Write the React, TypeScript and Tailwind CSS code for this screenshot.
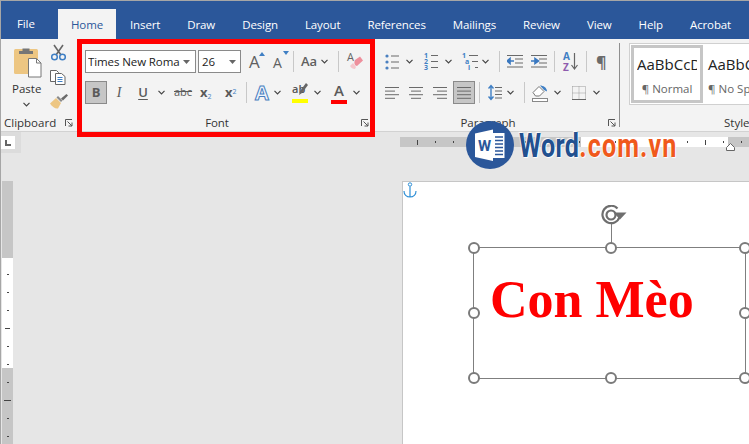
type P = { className?: string }

const ui = "font-['Open_Sans','Noto_Sans',sans-serif]"
const tabs = ["Insert", "Draw", "Design", "Layout", "References", "Mailings", "Review", "View", "Help", "Acrobat"]
const hTicks = Array.from({ length: 19 }, (_, i) => i)
const vTicks = Array.from({ length: 10 }, (_, i) => i)
const handles = [
  "left-[-6px] top-[-6px]", "left-[131px] top-[-6px]", "right-[-6px] top-[-6px]",
  "left-[-6px] top-[59px]", "right-[-6px] top-[59px]",
  "left-[-6px] bottom-[-6px]", "left-[131px] bottom-[-6px]", "right-[-6px] bottom-[-6px]",
]

function Chev({ className = "" }: P) {
  return (
    <svg width="7" height="5" viewBox="0 0 7 5" className={`shrink-0 ${className}`}>
      <path d="M.5 .8 3.5 3.8 6.5 .8" stroke="#444" strokeWidth="1.2" fill="none" />
    </svg>
  )
}

function Sep({ className = "" }: P) {
  return <div className={`w-px h-[21px] bg-[#c8c8c8] shrink-0 ${className}`} />
}

function Launcher({ className = "" }: P) {
  return (
    <svg width="8" height="8" viewBox="0 0 8 8" className={`shrink-0 ${className}`}>
      <path d="M.5 7V.5H7M2.5 2.5 7 7M7 3.5V7H3.5" stroke="#555" fill="none" />
    </svg>
  )
}

function Lines({ rows, className = "" }: { rows: number[][]; className?: string }) {
  return (
    <svg width="14" height="14" viewBox="0 0 14 14" className={`shrink-0 ${className}`}>
      {rows.map((r, i) => (
        <rect key={i} x={r[0]} y={1 + i * 3.6} width={r[1]} height="1" fill="#6a6a6a" />
      ))}
    </svg>
  )
}

function Dots({ className = "" }: P) {
  return (
    <svg width="14" height="16" viewBox="0 0 14 16" className={`shrink-0 ${className}`}>
      {[2, 8, 14].map((y) => (
        <circle key={y} cx="2" cy={y} r="1.6" fill="#4a80c0" />
      ))}
      {[2, 8, 14].map((y) => (
        <rect key={y} x="6" y={y - 0.5} width="8" height="1" fill="#6a6a6a" />
      ))}
    </svg>
  )
}

// numbered list buttons: marks are real text, rules are thin bars
function NumList({ marks, pads, widths, className = "" }: { marks: string[]; pads: string[]; widths: string[]; className?: string }) {
  return (
    <div className={`flex flex-col shrink-0 ${className}`}>
      {marks.map((m, i) => (
        <div key={m} className={`flex items-center h-[6px] ${pads[i]}`}>
          <span className="w-[5px] text-[7px] leading-[6px] font-bold text-[#3f7fc4]">{m}</span>
          <div className={`h-px ml-[2px] bg-[#6a6a6a] ${widths[i]}`} />
        </div>
      ))}
    </div>
  )
}

function Indent({ flip, className = "" }: { flip?: boolean; className?: string }) {
  return (
    <svg width="16" height="13" viewBox="0 0 16 13" className={`shrink-0 ${className}`}>
      {[0.5, 4, 8, 12].map((y, i) => (
        <rect key={y} x={i === 1 || i === 2 ? 8 : 0} y={y - 0.5} width={i === 1 || i === 2 ? 8 : 16} height="1" fill="#6a6a6a" />
      ))}
      <path d={flip ? "M0 6h4V3.5L7.5 6 4 8.5V6" : "M7 6H3V3.5L0 6l3 2.5V6"} stroke="#3a78c0" strokeWidth="1.6" fill="#3a78c0" />
    </svg>
  )
}

function PasteIcon() {
  return (
    <svg width="29" height="31" viewBox="0 0 29 31" className="shrink-0">
      <rect x="0" y="2" width="24" height="25" rx="1.5" fill="#edc682" />
      <path d="M5 7V4h3.5V1.500h7V4H19v3z" fill="#767676" />
      <path d="M14.500 11.500h8l4.500 4.500v14h-12.500z" fill="#fff" stroke="#777" />
      <path d="M22.500 11.500V16H27" fill="none" stroke="#777" />
    </svg>
  )
}

function CutIcon() {
  return (
    <svg width="15" height="17" viewBox="0 0 15 17" className="ml-[1px]">
      <path d="M3 1l7 10M12 1 5 11" stroke="#666" strokeWidth="1.6" />
      <circle cx="3.500" cy="13" r="2.800" fill="none" stroke="#3f7fc4" strokeWidth="1.500" />
      <circle cx="11.500" cy="13" r="2.800" fill="none" stroke="#3f7fc4" strokeWidth="1.500" />
    </svg>
  )
}

function CopyIcon() {
  return (
    <svg width="16" height="15" viewBox="0 0 16 15">
      <path d="M.5.5h6l2 2v9h-8z" fill="#fff" stroke="#666" />
      <path d="M5.500 3.500h6l3.500 3v8h-9.500z" fill="#fff" stroke="#666" />
      <path d="M7.500 7.500h5M7.500 9.500h5M7.500 11.500h5" stroke="#3f7fc4" />
    </svg>
  )
}

function BrushIcon() {
  return (
    <svg width="18" height="16" viewBox="0 0 18 16">
      <path d="M0 9.500 6 4l5 5-3 5.500c-3 .5-6-2-8-5z" fill="#edc682" />
      <path d="M6.500 3.500 11 8l1.500-1.500L8 2z" fill="#8a8a8a" />
      <path d="M11 4.500 16.500 0 18 1.500 13 6.500z" fill="#6a6a6a" />
    </svg>
  )
}

function Eraser({ className = "" }: P) {
  return (
    <span className={`relative w-[16px] h-[20px] shrink-0 ${className}`}>
      <span className="absolute left-0 top-[-1px] text-[11px] leading-none text-[#666]">A</span>
      <svg width="16" height="20" viewBox="0 0 16 20" className="absolute inset-0">
        <path d="M8 8l5-3.500 3 4-6 5.500c-2 0-3.500-3-2-6z" fill="#ee8f9c" />
        <path d="M3 14l3-3 3 4-1 2c-2 0-4-1-5-3z" fill="#f5c6cc" />
      </svg>
    </span>
  )
}

function Highlight({ className = "" }: P) {
  return (
    <span className={`relative w-[16px] h-[22px] flex flex-col shrink-0 ${className}`}>
      <span className="text-[11px] leading-[13px] h-[16px] text-[#555] font-semibold">ab</span>
      <svg width="9" height="12" viewBox="0 0 9 12" className="absolute right-0 top-[1px]">
        <path d="M7 0 9 2 3 10 0 12l1-4z" fill="#666" />
      </svg>
      <span className="h-[4px] bg-[#ffff00] mt-[1px]" />
    </span>
  )
}

function SpacingIcon({ className = "" }: P) {
  return (
    <svg width="14" height="17" viewBox="0 0 14 17" className={`shrink-0 ${className}`}>
      <path d="M3 2v13M.500 4.500 3 1.500l2.500 3M.500 12.500l2.500 3 2.500-3" stroke="#3f7fc4" strokeWidth="1.400" fill="none" />
      <path d="M7 3.500h7M7 7h7M7 10.500h7M7 14h7" stroke="#6a6a6a" />
    </svg>
  )
}

function Shading({ className = "" }: P) {
  return (
    <svg width="16" height="18" viewBox="0 0 16 18" className={`shrink-0 ${className}`}>
      <path d="M1 8.500 7 2.500l5 5-4.500 4.500h-4z" fill="#fff" stroke="#777" />
      <path d="M8 1.500c3 0 7 2 7 6l-3-1.500z" fill="#3f7fc4" />
      <rect x=".500" y="14.500" width="15" height="3" fill="#fff" stroke="#888" />
    </svg>
  )
}

function BordersIcon({ className = "" }: P) {
  return (
    <svg width="14" height="14" viewBox="0 0 14 14" className={`shrink-0 ${className}`}>
      <path d="M.5.5h13v13M.5.5v13h13M7 .5v13M.5 7h13" fill="none" stroke="#9a9a9a" strokeDasharray="1 1" />
      <path d="M0 13.500h14" stroke="#666" />
    </svg>
  )
}

function Anchor({ className = "" }: P) {
  return (
    <svg width="14" height="16" viewBox="0 0 14 16" className={className}>
      <circle cx="7" cy="2.500" r="1.700" fill="none" stroke="#2e8fd6" />
      <path d="M7 4.500V15M1 9c0 3.500 2.500 6 6 6s6-2.500 6-6" fill="none" stroke="#2e8fd6" strokeWidth="1.200" />
    </svg>
  )
}

function RotateIcon({ className = "" }: P) {
  return (
    <svg width="26" height="20" viewBox="0 0 26 20" className={className}>
      <path d="M16.500 3.500A8.700 8.700 0 1 0 18.500 12" fill="none" stroke="#6e6e6e" strokeWidth="2.200" />
      <circle cx="10" cy="10" r="4.500" fill="none" stroke="#6e6e6e" strokeWidth="2.200" />
      <path d="M12.500 7.500h13l-6.500 7z" fill="#6e6e6e" />
    </svg>
  )
}

function WordBadge() {
  return (
    <svg width="48" height="48" viewBox="0 0 48 48" className="shrink-0">
      <circle cx="24" cy="24" r="24" fill="#2b579a" />
      <path d="M9 12.500 27 8.500V40L9 36z" fill="#fff" />
      <path d="M27 12h11.500v25H27z" fill="#fff" />
      <path d="M29 16h8M29 19.500h8M29 23h8M29 26.500h8M29 30h8M29 33.500h8" stroke="#2b579a" strokeWidth="1.400" />
      <text x="12" y="30" fontSize="15" fontWeight="700" fill="#2b579a" fontFamily="Roboto, sans-serif">W</text>
    </svg>
  )
}

function GroupLabel({ text, width, gap }: { text: string; width: number; gap: string }) {
  return (
    <div className="mt-auto flex items-center h-[16px] text-[11.5px] tracking-[-.1px] text-[#333]">
      <span className="text-center" style={{ width }}>{text}</span>
      <Launcher className={gap} />
    </div>
  )
}

export default function App() {
  return (
    <div className={`relative w-[749px] h-[444px] overflow-hidden border-l border-t border-[#a6a6a6] bg-[#e6e6e6] flex flex-col ${ui}`}>
      {/* Tabs */}
      <div className="h-[38px] bg-[#2b579a] flex items-end text-[11.5px] leading-[16px] tracking-[-.12px] text-white shrink-0">
        <span className="ml-[16px] mb-[7px] w-[41px] shrink-0">File</span>
        <span className="w-[58px] h-[30px] pt-[2px] bg-[#f3f3f3] text-[#2b579a] flex items-center justify-center shrink-0">Home</span>
        <div className="flex gap-[27px] ml-[14px] mb-[6px] shrink-0">
          {tabs.map((t) => (
            <span key={t}>{t}</span>
          ))}
        </div>
      </div>

      {/* Ribbon */}
      <div className="h-[93px] bg-[#f3f3f3] border-b border-[#d2d2d2] flex shrink-0">
        {/* Clipboard */}
        <div className="w-[76px] flex flex-col shrink-0">
          <div className="flex">
            <div className="w-[49px] pt-[8px] pl-[13px] flex flex-col">
              <PasteIcon />
              <span className="text-[11.5px] leading-[16px] text-[#333] mt-[3px] ml-[-2px]">Paste</span>
              <Chev className="ml-[9px] mt-[5px]" />
            </div>
            <div className="flex flex-col pt-[5px] gap-[9px]">
              <CutIcon />
              <CopyIcon />
              <BrushIcon />
            </div>
          </div>
          <div className="mt-auto flex items-center h-[16px] text-[11.5px] text-[#333] pl-[3px]">
            <span className="w-[61px]">Clipboard</span>
            <Launcher />
          </div>
        </div>

        {/* Font */}
        <div className="w-[303px] pl-[8px] pt-[11px] flex flex-col shrink-0">
          <div className="flex items-center h-[23px] text-[#444]">
            <div className="w-[111px] h-[23px] bg-white border border-[#8a8a8a] flex items-center pl-[2px] text-[11.5px] tracking-[-.1px] text-[#222] shrink-0">
              <span className="w-[92px] overflow-hidden whitespace-nowrap">Times New Roman</span>
              <svg width="7" height="4" className="ml-[3px]"><path d="M0 0h7L3.500 4z" fill="#666" /></svg>
            </div>
            <div className="ml-[2px] w-[43px] h-[23px] bg-white border border-[#8a8a8a] flex items-center pl-[3px] text-[11.5px] text-[#222] shrink-0">
              <span className="w-[27px]">26</span>
              <svg width="7" height="4"><path d="M0 0h7L3.500 4z" fill="#666" /></svg>
            </div>
            <div className="ml-[8px] w-[15px] relative shrink-0 text-[17px] leading-[20px] text-[#5f5f5f]">
              A
              <svg width="6" height="4" className="absolute right-[-1px] top-[0px]"><path d="M0 4 3 0l3 4z" fill="#3f7fc4" /></svg>
            </div>
            <div className="ml-[9px] w-[15px] relative shrink-0 text-[14px] leading-[20px] text-[#5f5f5f] pt-[3px]">
              A
              <svg width="6" height="4" className="absolute right-[-1px] top-[1px]"><path d="M0 0h6L3 4z" fill="#3f7fc4" /></svg>
            </div>
            <Sep className="ml-[5px]" />
            <span className="ml-[7px] w-[16px] text-[13px] text-[#5f5f5f] font-semibold shrink-0">Aa</span>
            <Chev className="ml-[4px]" />
            <Sep className="ml-[10px]" />
            <Eraser className="ml-[8px]" />
          </div>
          <div className="flex items-center h-[23px] mt-[8px] text-[#5a5a5a]">
            <div className="w-[22px] h-[23px] bg-[#c6c6c6] border border-[#8a8a8a] flex items-center justify-center text-[13px] font-bold shrink-0">B</div>
            <span className="ml-[6px] w-[12px] text-center text-[14px] italic font-['Liberation_Serif',serif] shrink-0">I</span>
            <span className="ml-[12px] w-[12px] text-center text-[13px] font-semibold underline underline-offset-2 shrink-0">U</span>
            <Chev className="ml-[9px]" />
            <span className="ml-[9px] w-[18px] text-center text-[11px] line-through shrink-0">abc</span>
            <span className="ml-[8px] w-[14px] text-[13px] font-bold leading-none shrink-0">x<sub className="text-[7px] text-[#3f7fc4] font-normal">2</sub></span>
            <span className="ml-[11px] w-[14px] text-[13px] font-bold leading-none shrink-0">x<sup className="text-[7px] text-[#3f7fc4] font-normal">2</sup></span>
            <Sep className="ml-[7px]" />
            <span className="ml-[8px] w-[15px] text-[20px] leading-none font-bold text-[#eef4fb] [-webkit-text-stroke:1px_#4a80c0] shrink-0">A</span>
            <Chev className="ml-[4px]" />
            <Highlight className="ml-[11px]" />
            <Chev className="ml-[6px]" />
            <div className="ml-[10px] w-[16px] h-[22px] flex flex-col items-center shrink-0">
              <span className="text-[15px] leading-[17px] h-[18px] font-semibold text-[#5a5a5a]">A</span>
              <span className="w-[16px] h-[4px] bg-[#ff0000]" />
            </div>
            <Chev className="ml-[6px]" />
          </div>
          <div className="mt-auto ml-[-8px]">
            <GroupLabel text="Font" width={280} gap="ml-[4px]" />
          </div>
        </div>

        {/* Paragraph */}
        <div className="w-[240px] pl-[5px] pt-[11px] flex flex-col shrink-0 relative">
          <div className="flex items-center h-[23px] text-[#555]">
            <Dots />
            <Chev className="ml-[7px]" />
            <NumList marks={["1", "2", "3"]} pads={["", "", ""]} widths={["w-[7px]", "w-[7px]", "w-[7px]"]} className="ml-[11px] w-[14px]" />
            <Chev className="ml-[7px]" />
            <NumList marks={["1", "a", "i"]} pads={["", "pl-[3px]", "pl-[6px]"]} widths={["w-[9px]", "w-[6px]", "w-[3px]"]} className="ml-[10px] w-[16px]" />
            <Chev className="ml-[4px]" />
            <Sep className="ml-[10px]" />
            <Indent className="ml-[7px]" />
            <Indent flip className="ml-[8px]" />
            <Sep className="ml-[7px]" />
            <div className="ml-[8px] w-[15px] h-[22px] flex shrink-0">
              <div className="flex flex-col text-[10px] leading-[11px] font-bold">
                <span className="text-[#3f7fc4]">A</span>
                <span className="text-[#8e5cae]">Z</span>
              </div>
              <svg width="7" height="18" className="ml-[1px] mt-[2px]"><path d="M3.500 0v16M.500 12l3 4 3-4" stroke="#666" strokeWidth="1.200" fill="none" /></svg>
            </div>
            <Sep className="ml-[8px]" />
            <span className="ml-[9px] w-[11px] text-[16px] leading-none text-[#6a6a6a] font-bold shrink-0">¶</span>
          </div>
          <div className="flex items-center h-[23px] mt-[8px]">
            <Lines rows={[[0, 14], [0, 10], [0, 14], [0, 10]]} />
            <Lines rows={[[0, 14], [2, 10], [0, 14], [2, 10]]} className="ml-[10px]" />
            <Lines rows={[[0, 14], [4, 10], [0, 14], [4, 10]]} className="ml-[10px]" />
            <div className="ml-[6px] w-[22px] h-[23px] bg-[#c6c6c6] border border-[#8a8a8a] flex items-center justify-center shrink-0">
              <Lines rows={[[0, 14], [0, 14], [0, 14], [0, 14]]} />
            </div>
            <Sep className="ml-[4px]" />
            <SpacingIcon className="ml-[8px]" />
            <Chev className="ml-[5px]" />
            <Sep className="ml-[10px]" />
            <Shading className="ml-[7px]" />
            <Chev className="ml-[6px]" />
            <BordersIcon className="ml-[11px]" />
            <Chev className="ml-[7px]" />
          </div>
          <div className="mt-auto ml-[-5px]">
            <GroupLabel text="Paragraph" width={216} gap="ml-[12px]" />
          </div>
          <div className="absolute right-0 top-[4px] bottom-[4px] w-px bg-[#8f8f8f]" />
        </div>

        {/* Styles */}
        <div className="flex-1 min-w-0 flex flex-col pt-[4px] overflow-hidden">
          <div className="ml-[9px] h-[62px] bg-white border border-[#d0d0d0] border-r-0 flex p-[1px] pr-0 w-[130px] shrink-0">
            <div className="w-[72px] h-[58px] border-[3px] border-[#c6c6c6] flex flex-col items-center shrink-0">
              <span className="w-[60px] mt-[6px] overflow-hidden whitespace-nowrap text-[15px] leading-[20px] text-[#222]">AaBbCcDd</span>
              <span className="mt-[7px] text-[11.5px] leading-[16px] text-[#666] whitespace-nowrap">¶ Normal</span>
            </div>
            <div className="ml-[5px] flex flex-col shrink-0">
              <span className="mt-[9px] text-[15px] leading-[20px] text-[#222] whitespace-nowrap">AaBbCcDd</span>
              <span className="mt-[7px] text-[11.5px] leading-[16px] text-[#666] whitespace-nowrap">¶ No Spacing</span>
            </div>
          </div>
          <span className="mt-auto h-[16px] leading-[16px] ml-[104px] text-[11.5px] text-[#333]">Styles</span>
        </div>
      </div>

      {/* Document area */}
      <div className="flex-1 flex min-h-0">
        <div className="w-[399px] shrink-0 flex flex-col">
          <div className="w-[20px] h-[21px] bg-[#dcdcdc] flex items-start">
            <div className="mt-[4px] w-[14px] h-[13px] bg-white pl-[4px] pt-[4px] shrink-0">
              <div className="w-[6px] h-[6px] border-l-2 border-b-2 border-[#666]" />
            </div>
          </div>
          <div className="ml-[1px] mt-[28px] w-[11px] flex-1 flex flex-col relative">
            <div className="h-[77px] bg-[#c6c6c6]" />
            <div className="h-[110px] bg-white" />
            <div className="flex-1 bg-[#c6c6c6]" />
            <div className="absolute left-0 right-0 top-[93px] flex flex-col items-center">
              {vTicks.map((i) => (
                <div key={i} className="h-[18px] flex items-start justify-center">
                  <div className={`h-px bg-[#444] ${i === 3 ? "w-[5px]" : i === 7 ? "w-[7px]" : "w-[2px]"}`} />
                </div>
              ))}
            </div>
          </div>
        </div>

        <div className="flex-1 min-w-0 flex flex-col">
          {/* Horizontal ruler */}
          <div className="mt-[5px] h-[10px] flex relative shrink-0">
            <div className="w-[181px] bg-[#c6c6c6]" />
            <div className="w-[147px] bg-white" />
            <div className="flex-1 bg-[#c6c6c6]" />
            <div className="absolute inset-0 flex pl-[17px] items-center">
              {hTicks.map((i) => (
                <div key={i} className="w-[18px] shrink-0">
                  <div className={`w-px bg-[#444] ${i % 4 === 0 ? "h-[5px]" : "h-[2px]"}`} />
                </div>
              ))}
            </div>
            <svg width="9" height="8" className="absolute left-[326px] top-[6px]">
              <path d="M.5 7.500v-3l4-4 4 4v3z" fill="#fff" stroke="#666" />
            </svg>
          </div>

          {/* Page */}
          <div className="mt-[34px] ml-[2px] flex-1 bg-white border-l border-t border-[#c6c6c6] relative overflow-hidden">
            <Anchor className="absolute left-0 top-[0px]" />
            <div className="ml-[70px] mt-[65px] w-[273px] h-[132px] border border-[#7f7f7f] relative flex items-center pl-[16px]">
              <span className="font-['Liberation_Serif',serif] font-bold text-[52px] leading-none text-[#ff0000] mt-[-26px] whitespace-nowrap">Con Mèo</span>
              <div className="absolute left-[137px] top-[-25px] w-px h-[25px] bg-[#7f7f7f]" />
              <RotateIcon className="absolute left-[127px] top-[-43px]" />
              {handles.map((h) => (
                <div key={h} className={`absolute w-[12px] h-[12px] rounded-full bg-white border-2 border-[#7a7a7a] ${h}`} />
              ))}
            </div>
          </div>
        </div>
      </div>

      {/* Red highlight */}
      <div className="absolute left-[76px] top-[38px] w-[298px] h-[98px] border-[5px] border-[#ff0000]" />

      {/* Watermark */}
      <div className="absolute left-[465px] top-[120px] flex items-center">
        <WordBadge />
        <div className="ml-[5px] w-[160px] flex origin-left scale-x-[.76] font-['Roboto',sans-serif] font-bold text-[33px] leading-none tracking-[.5px] [text-shadow:1px_1px_1px_#fff,-1px_-1px_1px_#fff]">
          <span className="text-[#22508f]">Word</span>
          <span className="text-[#f0591c] tracking-[1.5px]">.com.vn</span>
        </div>
      </div>
    </div>
  )
}
